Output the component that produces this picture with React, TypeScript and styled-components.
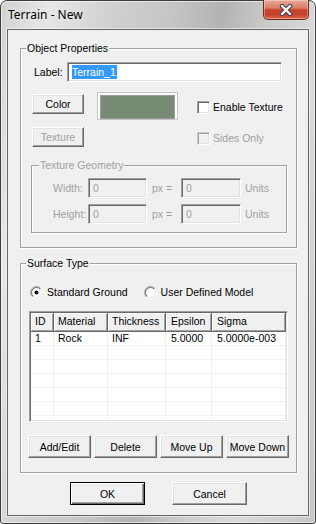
import React from "react";
import styled, { createGlobalStyle, css } from "styled-components";

const Global = createGlobalStyle`
  html, body { margin: 0; padding: 0; background: #fff; }
  body { font-family: "Liberation Sans", Arial, sans-serif; font-size: 10.5px; color: #000; }
  * { box-sizing: border-box; }
`;

const sunken = css`
  border: 1px solid;
  border-color: #a0a0a0 #fff #fff #a0a0a0;
  box-shadow: inset 1px 1px 0 #696969, inset -1px -1px 0 #e3e3e3;
`;

const Window = styled.div`
  width: 316px;
  height: 524px;
  border: 1px solid #3e3e3e;
  border-radius: 7px 7px 3px 3px;
  padding: 0 6px 7px 6px;
  display: flex;
  flex-direction: column;
  background: linear-gradient(100deg, #d2d2d2 0%, #e6e6e6 12%, #d0d0d0 28%, #c6c6c6 42%, #b3b3b3 55%, #cacaca 66%, #dadada 80%, #c6c6c6 100%);
  box-shadow: inset 0 0 0 1px rgba(255, 255, 255, 0.55);
`;

const TitleBar = styled.div`
  height: 28px;
  display: flex;
  align-items: flex-start;
  flex-shrink: 0;
`;

const Title = styled.div`
  margin: 6px 0 0 1px;
  font-family: "Noto Sans", "Open Sans", sans-serif;
  font-size: 12px;
  line-height: 16px;
  color: #000;
  text-shadow: 0 0 6px rgba(255, 255, 255, 0.9);
`;

const CloseButton = styled.div`
  margin: -1px 0 0 auto;
  width: 46px;
  height: 20px;
  border: 1px solid #6a2a1d;
  border-top: none;
  border-radius: 0 0 5px 5px;
  background: linear-gradient(#e9a899 0%, #dc7d65 42%, #c4432b 52%, #c6442b 78%, #dd6a4f 100%);
  box-shadow: inset 0 0 0 1px rgba(255, 255, 255, 0.35);
  display: flex;
  align-items: center;
  justify-content: center;
`;

const Client = styled.div`
  flex: 1;
  border: 1px solid #646464;
  box-shadow: 0 0 0 1px rgba(255, 255, 255, 0.55);
  background: #f0f0f0;
  display: flex;
  flex-direction: column;
  padding: 18px 11px 0 12px;
`;

const GroupBox = styled.div<{ $w?: number; $h: number; $mt?: number; $ml?: number }>`
  position: relative;
  width: ${(p) => (p.$w ? `${p.$w}px` : "auto")};
  height: ${(p) => p.$h}px;
  margin-top: ${(p) => p.$mt ?? 0}px;
  margin-left: ${(p) => p.$ml ?? 0}px;
  border: 1px solid #a0a0a0;
  box-shadow: inset 1px 1px 0 #fff, 1px 1px 0 #fff;
  display: flex;
  flex-direction: column;
  flex-shrink: 0;
`;

const Legend = styled.span<{ $indent?: number; $disabled?: boolean }>`
  position: absolute;
  top: -7px;
  left: ${(p) => p.$indent ?? 5}px;
  padding: 0 1px;
  line-height: 13px;
  background: #f0f0f0;
  color: ${(p) => (p.$disabled ? "#a0a0a0" : "#000")};
`;

const Row = styled.div<{ $mt: number; $pl: number; $h: number }>`
  display: flex;
  align-items: flex-start;
  margin-top: ${(p) => p.$mt}px;
  padding-left: ${(p) => p.$pl}px;
  height: ${(p) => p.$h}px;
  flex-shrink: 0;
`;

const FieldLabel = styled.span<{ $w: number; $disabled?: boolean }>`
  width: ${(p) => p.$w}px;
  line-height: 20px;
  color: ${(p) => (p.$disabled ? "#a0a0a0" : "#000")};
  white-space: nowrap;
`;

const TextField = styled.div<{ $w: number; $disabled?: boolean }>`
  ${sunken};
  width: ${(p) => p.$w}px;
  height: 20px;
  padding: 2px 0 0 4px;
  line-height: 14px;
  background: ${(p) => (p.$disabled ? "#f0f0f0" : "#fff")};
  color: ${(p) => (p.$disabled ? "#a0a0a0" : "#000")};
`;

const Selected = styled.span`
  display: inline-block;
  background: #3399ff;
  color: #fff;
  line-height: 14px;
  padding: 0 1px 0 0;
`;

const Button = styled.button<{ $w: number; $h?: number; $mt?: number; $default?: boolean }>`
  width: ${(p) => p.$w}px;
  height: ${(p) => p.$h ?? 23}px;
  margin: ${(p) => p.$mt ?? 0}px 0 0 0;
  padding: 0;
  flex-shrink: 0;
  font-family: "Liberation Sans", Arial, sans-serif;
  font-size: 10.5px;
  color: #000;
  background: #f0f0f0;
  border: 1px solid;
  border-color: #fff #696969 #696969 #fff;
  box-shadow: inset -1px -1px 0 #a0a0a0, inset 1px 1px 0 #e3e3e3;
  &:disabled {
    color: #a0a0a0;
  }
  ${(p) =>
    p.$default &&
    css`
      border-color: #000;
      box-shadow: inset 1px 1px 0 #fff, inset -1px -1px 0 #696969, inset -2px -2px 0 #a0a0a0;
    `}
`;

const Swatch = styled.div<{ $color: string }>`
  width: 81px;
  height: 28px;
  margin-left: 13px;
  margin-top: -1px;
  padding: 2px;
  background: #fff;
  border: 1px solid #c4c4c4;
  flex-shrink: 0;
  &::after {
    content: "";
    display: block;
    height: 100%;
    border: 1px solid #9a9a9a;
    background: ${(p) => p.$color};
  }
`;

const CheckLabel = styled.label<{ $ml: number; $mt: number; $disabled?: boolean }>`
  display: flex;
  align-items: center;
  gap: 3px;
  margin-left: ${(p) => p.$ml}px;
  margin-top: ${(p) => p.$mt}px;
  line-height: 13px;
  color: ${(p) => (p.$disabled ? "#a0a0a0" : "#000")};
  white-space: nowrap;
`;

const CheckBox = styled.span<{ $disabled?: boolean }>`
  ${sunken};
  width: 13px;
  height: 13px;
  flex-shrink: 0;
  background: ${(p) => (p.$disabled ? "#f0f0f0" : "#fff")};
  ${(p) =>
    p.$disabled &&
    css`
      border-color: #c8c8c8 #fff #fff #c8c8c8;
      box-shadow: inset 1px 1px 0 #a0a0a0, inset -1px -1px 0 #e3e3e3;
    `}
`;

const PxLabel = styled.span`
  width: 34px;
  padding-left: 5px;
  line-height: 20px;
  color: #a0a0a0;
  white-space: nowrap;
`;

const UnitsLabel = styled.span`
  margin-left: 4px;
  line-height: 20px;
  color: #a0a0a0;
`;

const RadioLabel = styled.label<{ $ml?: number }>`
  display: flex;
  align-items: center;
  gap: 4px;
  margin-left: ${(p) => p.$ml ?? 0}px;
  line-height: 13px;
  white-space: nowrap;
`;

const Table = styled.div`
  ${sunken};
  width: 259px;
  height: 111px;
  margin: 12px 0 0 8px;
  padding: 1px;
  display: flex;
  flex-direction: column;
  background: #fff;
  overflow: hidden;
  flex-shrink: 0;
`;

const GridRow = styled.div<{ $cols: string }>`
  display: grid;
  grid-template-columns: ${(p) => p.$cols};
  flex-shrink: 0;
`;

const HeadCell = styled.div<{ $pad: number }>`
  height: 19px;
  padding-left: ${(p) => p.$pad}px;
  line-height: 17px;
  background: #f0f0f0;
  border-right: 1px solid #696969;
  border-bottom: 1px solid #696969;
  box-shadow: inset 1px 1px 0 #fff, inset -1px -1px 0 #a0a0a0;
  white-space: nowrap;
  overflow: hidden;
`;

const BodyCell = styled.div<{ $pad: number }>`
  height: 14px;
  padding-left: ${(p) => p.$pad}px;
  line-height: 13px;
  border-right: 1px solid #f0f0f0;
  border-bottom: 1px solid #f0f0f0;
  white-space: nowrap;
  overflow: hidden;
`;

const ButtonRow = styled.div<{ $mt: number; $pl?: number; $gap: number; $center?: boolean }>`
  display: flex;
  gap: ${(p) => p.$gap}px;
  margin-top: ${(p) => p.$mt}px;
  padding-left: ${(p) => p.$pl ?? 0}px;
  justify-content: ${(p) => (p.$center ? "center" : "flex-start")};
  flex-shrink: 0;
`;

const CloseGlyph = () => (
  <svg width="14" height="12" viewBox="0 0 14 12">
    <path d="M3 2 L11 10 M11 2 L3 10" stroke="#3b3f52" strokeWidth="4.4" strokeLinecap="round" fill="none" />
    <path d="M3 2 L11 10 M11 2 L3 10" stroke="#fff" strokeWidth="2.4" strokeLinecap="round" fill="none" />
  </svg>
);

const Radio = ({ checked }: { checked?: boolean }) => (
  <svg width="13" height="13" viewBox="0 0 13 13">
    <defs>
      <linearGradient id="rOuter" x1="0" y1="0" x2="1" y2="1">
        <stop offset="0.5" stopColor="#a0a0a0" />
        <stop offset="0.5" stopColor="#ffffff" />
      </linearGradient>
      <linearGradient id="rInner" x1="0" y1="0" x2="1" y2="1">
        <stop offset="0.5" stopColor="#696969" />
        <stop offset="0.5" stopColor="#e3e3e3" />
      </linearGradient>
    </defs>
    <circle cx="6.5" cy="6.5" r="6" fill="none" stroke="url(#rOuter)" strokeWidth="1" />
    <circle cx="6.5" cy="6.5" r="5" fill="#fff" stroke="url(#rInner)" strokeWidth="1" />
    {checked && <circle cx="6.5" cy="6.5" r="2" fill="#000" />}
  </svg>
);

const columns = [
  { title: "ID", w: 23, pad: 4 },
  { title: "Material", w: 54, pad: 4 },
  { title: "Thickness", w: 58, pad: 4 },
  { title: "Epsilon", w: 46, pad: 5 },
  { title: "Sigma", w: 74, pad: 5 },
];

const rows: string[][] = [
  ["1", "Rock", "INF", "5.0000", "5.0000e-003"],
  ["", "", "", "", ""],
  ["", "", "", "", ""],
  ["", "", "", "", ""],
  ["", "", "", "", ""],
  ["", "", "", "", ""],
  ["", "", "", "", ""],
];

const cols = columns.map((c) => `${c.w}px`).join(" ");

export default function App() {
  return (
    <>
      <Global />
      <Window>
        <TitleBar>
          <Title>Terrain - New</Title>
          <CloseButton>
            <CloseGlyph />
          </CloseButton>
        </TitleBar>
        <Client>
          <GroupBox $h={200}>
            <Legend>Object Properties</Legend>
            <Row $mt={13} $pl={13} $h={20}>
              <FieldLabel $w={33}>Label:</FieldLabel>
              <TextField $w={215}>
                <Selected>Terrain_1</Selected>
              </TextField>
            </Row>
            <Row $mt={11} $pl={11} $h={28}>
              <Button $w={52} $h={20} $mt={1}>Color</Button>
              <Swatch $color="#788b74" />
              <CheckLabel $ml={19} $mt={8}>
                <CheckBox />
                Enable Texture
              </CheckLabel>
            </Row>
            <Row $mt={6} $pl={11} $h={20}>
              <Button $w={52} $h={20} disabled>Texture</Button>
              <CheckLabel $ml={113} $mt={5} $disabled>
                <CheckBox $disabled />
                Sides Only
              </CheckLabel>
            </Row>
            <GroupBox $w={256} $h={68} $mt={18} $ml={10}>
              <Legend $indent={7} $disabled>Texture Geometry</Legend>
              <Row $mt={12} $pl={21} $h={20}>
                <FieldLabel $w={35} $disabled>Width:</FieldLabel>
                <TextField $w={59} $disabled>0</TextField>
                <PxLabel>px =</PxLabel>
                <TextField $w={60} $disabled>0</TextField>
                <UnitsLabel>Units</UnitsLabel>
              </Row>
              <Row $mt={6} $pl={21} $h={20}>
                <FieldLabel $w={35} $disabled>Height:</FieldLabel>
                <TextField $w={59} $disabled>0</TextField>
                <PxLabel>px =</PxLabel>
                <TextField $w={60} $disabled>0</TextField>
                <UnitsLabel>Units</UnitsLabel>
              </Row>
            </GroupBox>
          </GroupBox>
          <GroupBox $h={210} $mt={15}>
            <Legend>Surface Type</Legend>
            <Row $mt={22} $pl={9} $h={13}>
              <RadioLabel>
                <Radio checked />
                Standard Ground
              </RadioLabel>
              <RadioLabel $ml={16}>
                <Radio />
                User Defined Model
              </RadioLabel>
            </Row>
            <Table>
              <GridRow $cols={cols}>
                {columns.map((c) => (
                  <HeadCell key={c.title} $pad={c.pad}>
                    {c.title}
                  </HeadCell>
                ))}
              </GridRow>
              {rows.map((r, i) => (
                <GridRow key={i} $cols={cols}>
                  {r.map((v, j) => (
                    <BodyCell key={j} $pad={columns[j].pad}>
                      {v}
                    </BodyCell>
                  ))}
                </GridRow>
              ))}
            </Table>
            <ButtonRow $mt={13} $pl={7} $gap={3}>
              <Button $w={63}>Add/Edit</Button>
              <Button $w={63}>Delete</Button>
              <Button $w={63}>Move Up</Button>
              <Button $w={63}>Move Down</Button>
            </ButtonRow>
          </GroupBox>
          <ButtonRow $mt={9} $gap={27} $center>
            <Button $w={75} $default>OK</Button>
            <Button $w={75}>Cancel</Button>
          </ButtonRow>
        </Client>
      </Window>
    </>
  );
}
